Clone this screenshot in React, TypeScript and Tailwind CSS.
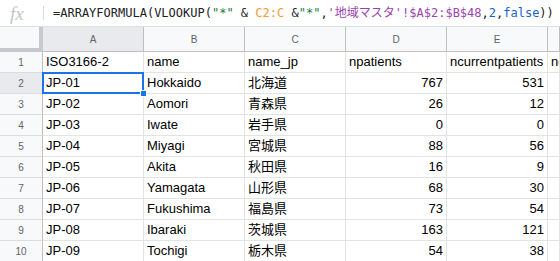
import React from 'react'

const cols = ['A', 'B', 'C', 'D', 'E', '']

const rows: [string, string, string, string, string, string][] = [
  ['ISO3166-2', 'name', 'name_jp', 'npatients', 'ncurrentpatients', 'nexits'],
  ['JP-01', 'Hokkaido', '北海道', '767', '531', ''],
  ['JP-02', 'Aomori', '青森県', '26', '12', ''],
  ['JP-03', 'Iwate', '岩手県', '0', '0', ''],
  ['JP-04', 'Miyagi', '宮城県', '88', '56', ''],
  ['JP-05', 'Akita', '秋田県', '16', '9', ''],
  ['JP-06', 'Yamagata', '山形県', '68', '30', ''],
  ['JP-07', 'Fukushima', '福島県', '73', '54', ''],
  ['JP-08', 'Ibaraki', '茨城県', '163', '121', ''],
  ['JP-09', 'Tochigi', '栃木県', '54', '38', ''],
]

const grid = 'grid grid-cols-[43px_101px_101px_101px_101px_101px_1fr]'

export default function App() {
  return (
    <div
      className="w-[560px] h-[261px] overflow-hidden bg-white text-black"
      style={{ fontFamily: '"Liberation Sans", Arial, "Noto Sans CJK JP", sans-serif' }}
    >
      {/* Formula bar */}
      <div className="h-[27px] flex items-center border-b border-[#e0e0e0] whitespace-nowrap">
        <span
          className="w-[42px] pl-[10px] text-[19px] italic text-[#c4c4c4] leading-none"
          style={{ fontFamily: '"Liberation Serif", serif' }}
        >
          fx
        </span>
        <span className="w-px h-[14px] bg-[#dadce0] mr-[9px] ml-[1px]" />
        <span
          className="text-[12px] text-[#202124]"
          style={{ fontFamily: '"DejaVu Sans Mono", "Noto Sans CJK JP", monospace' }}
        >
          =ARRAYFORMULA(VLOOKUP(<span className="text-[#188038]">"*"</span> &amp;{' '}
          <span className="text-[#f29a2e]">C2:C</span> &amp;<span className="text-[#188038]">"*"</span>,
          <span className="text-[#9b45b0]">'地域マスタ'!$A$2:$B$48</span>,
          <span className="text-[#1a5fcc]">2</span>,<span className="text-[#1a5fcc]">false</span>))
        </span>
      </div>

      {/* Column headers */}
      <div className={`${grid} h-[25px] bg-[#f8f9fa] text-[10px] text-[#5f6368]`}>
        <div className="border-r-4 border-b-4 border-[#c7c9cc] bg-[#f8f9fa]" />
        {cols.map((c, i) => (
          <div
            key={i}
            className={`flex items-center justify-center border-r border-b border-[#c0c0c0] ${
              c === 'A' ? 'bg-[#e8eaed]' : ''
            }`}
          >
            {c}
          </div>
        ))}
      </div>

      {/* Rows */}
      {rows.map((r, ri) => (
        <div key={ri} className={`${grid} h-[21px] text-[13px]`}>
          <div
            className={`flex items-center justify-center text-[10px] text-[#5f6368] border-r border-r-[#c0c0c0] border-b border-b-[#dadce0] ${
              ri === 1 ? 'bg-[#e8eaed]' : 'bg-[#f8f9fa]'
            }`}
          >
            {ri + 1}
          </div>
          {r.map((v, ci) => {
            const num = ri > 0 && (ci === 3 || ci === 4)
            const sel = ri === 1 && ci === 0
            return (
              <div
                key={ci}
                className={`relative flex items-center whitespace-nowrap overflow-hidden border-r border-b border-[#e2e3e3] ${
                  num ? 'justify-end pr-[3px]' : 'pl-[3px]'
                } ${sel ? 'overflow-visible' : ''}`}
              >
                {v}
                {sel && (
                  <>
                    <div className="absolute -left-px -top-px -right-px -bottom-px border-2 border-[#1a73e8] pointer-events-none" />
                    <div className="absolute -right-[4px] -bottom-[4px] w-[7px] h-[7px] bg-[#1a73e8] border border-white z-10" />
                  </>
                )}
              </div>
            )
          })}
        </div>
      ))}
    </div>
  )
}
